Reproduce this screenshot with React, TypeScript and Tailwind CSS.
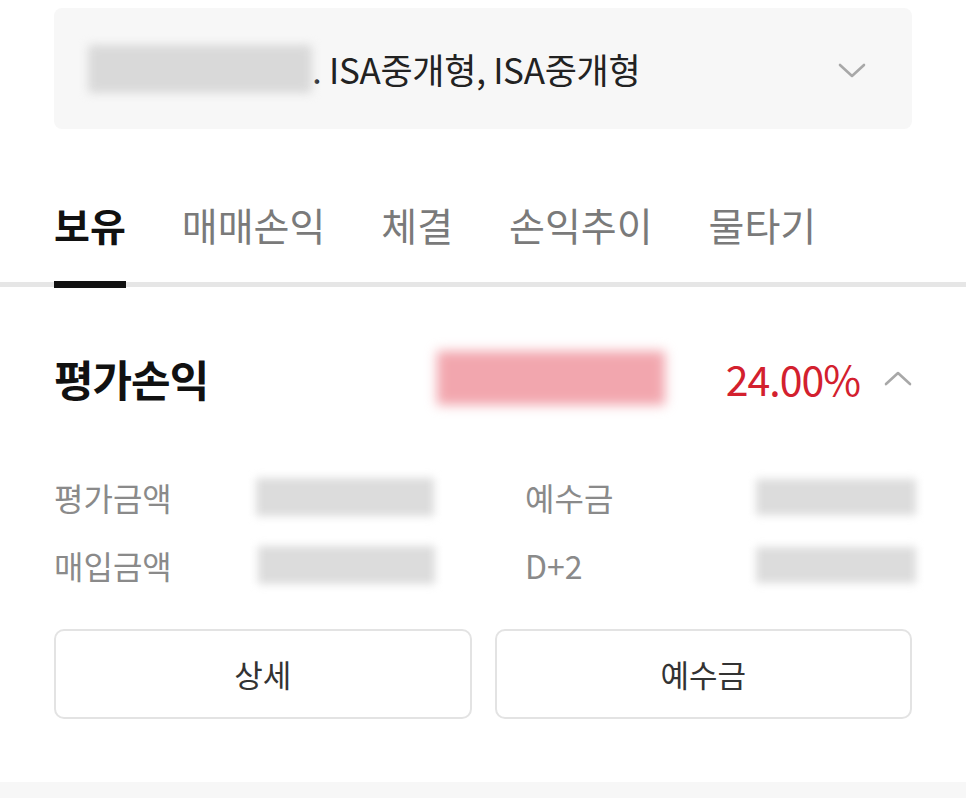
import React from "react";

const font = { fontFamily: '"Noto Sans CJK KR", "Noto Sans", sans-serif' };

function Chevron({ up = false }: { up?: boolean }) {
  return (
    <svg width="28" height="16" viewBox="0 0 28 16" fill="none">
      {up ? (
        <polyline points="2,14 14,3 26,14" stroke="#a8a8a8" strokeWidth="2.6" strokeLinecap="round" strokeLinejoin="round" />
      ) : (
        <polyline points="2,3 14,14 26,3" stroke="#a8a8a8" strokeWidth="2.6" strokeLinecap="round" strokeLinejoin="round" />
      )}
    </svg>
  );
}

export default function App() {
  const tabs = ["보유", "매매손익", "체결", "손익추이", "물타기"];
  return (
    <div className="w-[966px] h-[798px] bg-white overflow-hidden flex flex-col" style={font}>
      {/* account selector */}
      <div className="px-[54px] pt-[8px]">
        <div className="h-[121px] bg-[#f7f7f7] rounded-lg flex items-center pl-[34px] pr-[44px]">
          <div className="w-[224px] h-[48px] bg-[#d9d9d9] blur-[5px] rounded-sm shrink-0" />
          <span className="text-[35px] leading-none text-[#222] tracking-[-0.3px]">. ISA중개형, ISA중개형</span>
          <div className="ml-auto mt-[2px] mr-[2px]">
            <Chevron />
          </div>
        </div>
      </div>

      {/* tabs */}
      <div className="border-b-[5px] border-[#e6e6e6] px-[54px] flex gap-[56px] pt-[68px]">
        {tabs.map((t, i) => (
          <div
            key={t}
            className={
              i === 0
                ? "text-[39px] leading-[54px] font-bold text-[#111] pb-[25px] border-b-[7px] border-[#111] -mb-[6px]"
                : "text-[39px] leading-[54px] text-[#7a7a7a] pb-[31px]"
            }
          >
            {t}
          </div>
        ))}
      </div>

      {/* summary */}
      <div className="px-[54px] pt-[61px] flex flex-col flex-1">
        <div className="h-[60px] flex items-center">
          <span className="w-[156px] text-[43px] font-bold text-[#111] leading-none tracking-[-1px] whitespace-nowrap">평가손익</span>
          <div className="ml-[227px] w-[228px] h-[54px] bg-[#f2a6ae] blur-[6px]" />
          <span className="ml-auto text-[41px] text-[#d3202e] leading-none tracking-[-1px]">24.00%</span>
          <div className="ml-[24px] mr-0">
            <Chevron up />
          </div>
        </div>

        <div className="mt-[69px] flex flex-col gap-[28px]">
          <div className="h-[40px] flex items-center">
            <span className="w-[202px] text-[32px] text-[#8a8a8a] leading-none whitespace-nowrap">평가금액</span>
            <div className="w-[178px] h-[38px] bg-[#dcdcdc] blur-[4px]" />
            <span className="ml-[91px] w-[231px] text-[32px] text-[#8a8a8a] leading-none">예수금</span>
            <div className="w-[160px] h-[36px] bg-[#dcdcdc] blur-[4px] -mr-[6px]" />
          </div>
          <div className="h-[40px] flex items-center">
            <span className="w-[204px] text-[32px] text-[#8a8a8a] leading-none whitespace-nowrap">매입금액</span>
            <div className="w-[177px] h-[38px] bg-[#dcdcdc] blur-[4px]" />
            <span className="ml-[90px] w-[231px] text-[32px] text-[#8a8a8a] leading-none">D+2</span>
            <div className="w-[160px] h-[36px] bg-[#dcdcdc] blur-[4px] -mr-[6px]" />
          </div>
        </div>

        <div className="mt-[44px] flex gap-[23px] w-[858px]">
          <button className="flex-1 h-[90px] rounded-[10px] border-2 border-[#e3e3e3] bg-white text-[31px] text-[#333] flex items-center justify-center">
            상세
          </button>
          <button className="flex-1 h-[90px] rounded-[10px] border-2 border-[#e3e3e3] bg-white text-[31px] text-[#333] flex items-center justify-center">
            예수금
          </button>
        </div>
      </div>

      <div className="h-[16px] bg-[#f7f7f7] shrink-0" />
    </div>
  );
}
